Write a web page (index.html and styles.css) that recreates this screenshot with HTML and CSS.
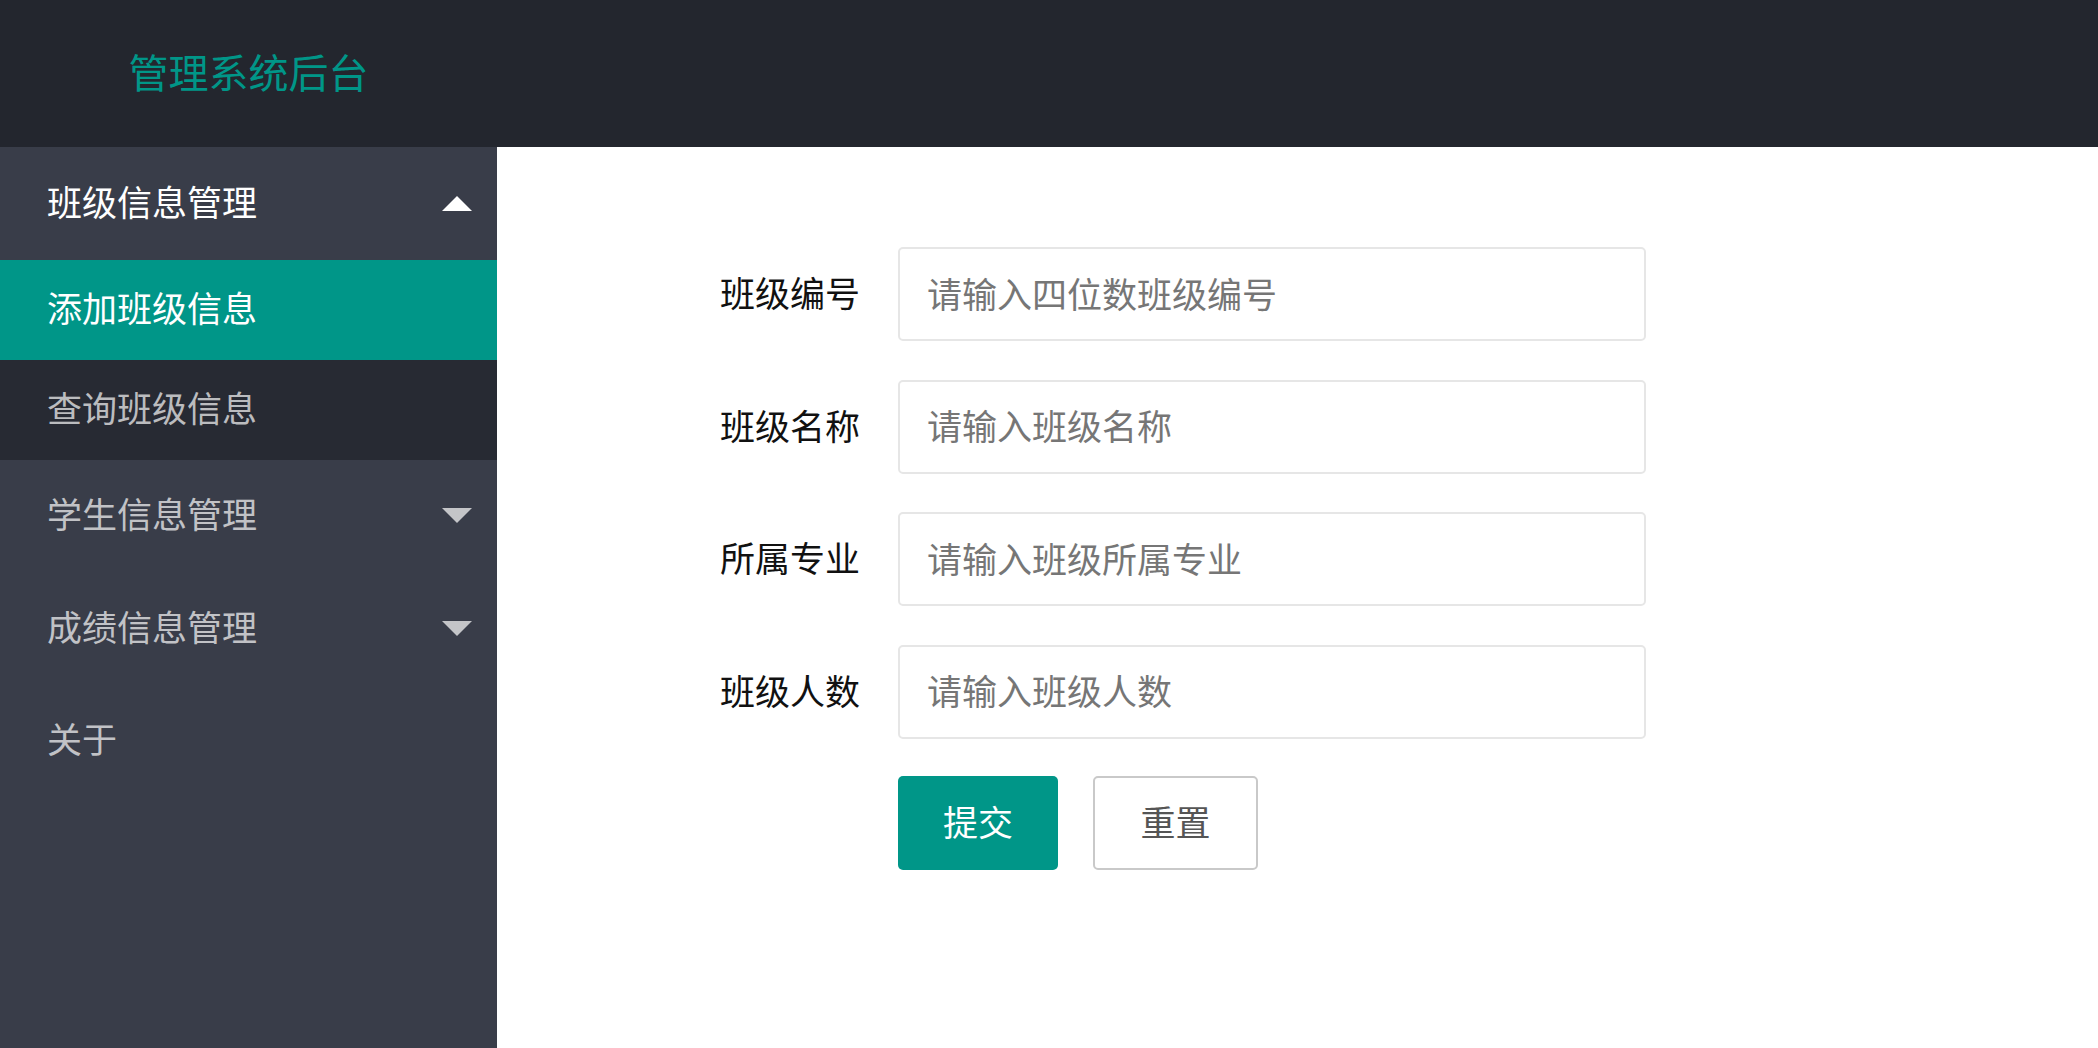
FILE: index.html
```html
<!DOCTYPE html>
<html lang="zh-CN">
<head>
<meta charset="utf-8">
<title>管理系统后台</title>
<link rel="stylesheet" href="styles.css">
</head>
<body>
<div class="app">
  <header class="topbar">
    <div class="logo">管理系统后台</div>
  </header>
  <div class="layout">
    <aside class="side">
      <ul class="nav">
        <li class="nav-item open">
          <a class="nav-title is-white">班级信息管理<span class="caret caret-up"></span></a>
          <dl class="child">
            <dd class="child-item active">添加班级信息</dd>
            <dd class="child-item">查询班级信息</dd>
          </dl>
        </li>
        <li class="nav-item">
          <a class="nav-title">学生信息管理<span class="caret caret-down"></span></a>
        </li>
        <li class="nav-item">
          <a class="nav-title">成绩信息管理<span class="caret caret-down"></span></a>
        </li>
        <li class="nav-item">
          <a class="nav-title">关于</a>
        </li>
      </ul>
    </aside>
    <main class="main">
      <form class="form">
        <div class="form-row">
          <label class="form-label">班级编号</label>
          <input class="form-input" type="text" placeholder="请输入四位数班级编号">
        </div>
        <div class="form-row">
          <label class="form-label">班级名称</label>
          <input class="form-input" type="text" placeholder="请输入班级名称">
        </div>
        <div class="form-row">
          <label class="form-label">所属专业</label>
          <input class="form-input" type="text" placeholder="请输入班级所属专业">
        </div>
        <div class="form-row">
          <label class="form-label">班级人数</label>
          <input class="form-input" type="text" placeholder="请输入班级人数">
        </div>
        <div class="form-actions">
          <button class="btn btn-primary" type="button">提交</button>
          <button class="btn btn-plain" type="reset">重置</button>
        </div>
      </form>
    </main>
  </div>
</div>
</body>
</html>
```

FILE: styles.css
```css
* { box-sizing: border-box; }

html, body {
  margin: 0;
  padding: 0;
  height: 100%;
  overflow: hidden;
  background: #ffffff;
  font-family: "Noto Sans CJK SC", "Noto Sans", sans-serif;
}

.app {
  display: flex;
  flex-direction: column;
  height: 100vh;
}

.topbar {
  height: 147px;
  flex: none;
  background: #23262e;
  display: flex;
  align-items: center;
  padding-bottom: 6px;
}

.logo {
  width: 497px;
  text-align: center;
  color: #009688;
  font-size: 40px;
  line-height: 1;
}

.layout {
  flex: 1;
  display: flex;
  min-height: 0;
}

.side {
  width: 497px;
  flex: none;
  background: #393d49;
}

.nav {
  list-style: none;
  margin: 0;
  padding: 0;
}

.nav-title {
  height: 112.5px;
  display: flex;
  align-items: center;
  justify-content: space-between;
  padding: 0 25px 6px 47px;
  font-size: 35px;
  color: rgba(255, 255, 255, 0.7);
  cursor: pointer;
}

.nav-title.is-white { color: #ffffff; }

.caret {
  width: 0;
  height: 0;
  margin-top: 6px;
  border-left: 15px solid transparent;
  border-right: 15px solid transparent;
}

.caret-up {
  border-bottom: 15px solid #ffffff;
}

.caret-down {
  border-top: 15px solid rgba(255, 255, 255, 0.7);
}

.child {
  margin: 0;
  padding: 0;
  background: rgba(0, 0, 0, 0.3);
}

.child-item {
  margin: 0;
  height: 100px;
  display: flex;
  align-items: center;
  padding: 0 0 6px 47px;
  font-size: 35px;
  color: rgba(255, 255, 255, 0.7);
}

.child-item.active {
  background: #009688;
  color: #ffffff;
}

.main {
  flex: 1;
  background: #ffffff;
  padding: 100px 0 0 126px;
}

.form-row {
  display: flex;
  align-items: center;
  margin-bottom: 38.5px;
}

.form-label {
  width: 275px;
  padding: 0 38px 5px 0;
  text-align: right;
  font-size: 35px;
  color: #111111;
}

.form-input {
  width: 748px;
  height: 94px;
  border: 2.5px solid #e6e6e6;
  border-radius: 5px;
  padding: 0 20px 4px 27px;
  font-size: 35px;
  font-family: "Noto Sans CJK SC", "Noto Sans", sans-serif;
  color: #333333;
  background: #ffffff;
  outline: none;
}

.form-input::placeholder {
  color: #767676;
}

.form-actions {
  display: flex;
  gap: 35px;
  margin-left: 275px;
  margin-top: -1.5px;
}

.btn {
  height: 94px;
  border-radius: 5px;
  font-size: 35px;
  font-family: "Noto Sans CJK SC", "Noto Sans", sans-serif;
  padding: 0 0 4px 0;
  cursor: pointer;
}

.btn-primary {
  width: 160px;
  background: #009688;
  color: #ffffff;
  border: none;
}

.btn-plain {
  width: 165px;
  background: #ffffff;
  color: #555555;
  border: 2.5px solid #c9c9c9;
}
```
